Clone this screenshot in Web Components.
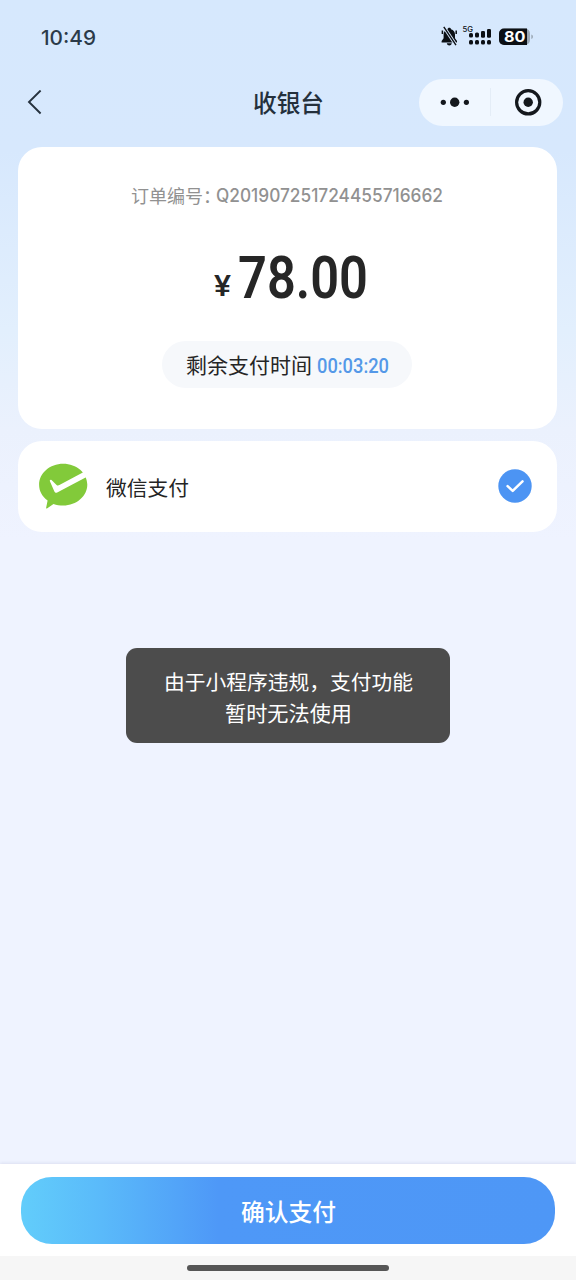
<!DOCTYPE html>
<html lang="zh-CN">
<head>
<meta charset="utf-8">
<title>收银台</title>
<style>
html,body{margin:0;height:100%;overflow:hidden}
body{font-family:Inter,"Noto Sans CJK SC",sans-serif;color:#222}
</style>
</head>
<body>
<checkout-page></checkout-page>
<script>
function define(name, html, setup) {
  customElements.define(name, class extends HTMLElement {
    constructor() {
      super();
      this.attachShadow({ mode: 'open' }).innerHTML = html;
    }
    connectedCallback() { if (setup) setup(this, this.shadowRoot); }
  });
}

/* One line of text fitted to a given width and baseline. */
define('fit-text', `<style>
:host{display:block;flex:none}
svg{display:block;overflow:visible}
text{fill:currentColor}
</style><svg><text></text></svg>`, (el, root) => {
  const w = el.getAttribute('w'), h = el.getAttribute('h');
  const svg = root.querySelector('svg'), t = root.querySelector('text');
  svg.setAttribute('width', w);
  svg.setAttribute('height', h);
  t.setAttribute('y', el.getAttribute('base'));
  t.setAttribute('textLength', w);
  t.setAttribute('lengthAdjust', 'spacingAndGlyphs');
  t.setAttribute('font-size', el.getAttribute('size'));
  t.setAttribute('font-weight', el.getAttribute('weight') || 400);
  t.textContent = el.getAttribute('text');
});

define('status-bar', `<style>
:host{display:flex;justify-content:space-between;height:74px;box-sizing:border-box;padding:26px 43px 0 40.500px;color:#2b3a49}
svg{display:block;margin-top:-1px}
</style>
<fit-text text="10:49" w="55" h="24" base="18.5" size="20.5" weight="500"></fit-text>
<svg width="92" height="24" viewBox="0 0 92 24" fill="#0b0f14">
<path d="M8.300 2.800c1 0 1.600.6 1.700 1.400 2.600.8 4 2.700 4 5.200v3.800l2 2.900v1.500H.6v-1.500l2-2.900V9.400c0-2.500 1.400-4.400 4-5.200.100-.8.700-1.400 1.700-1.400zM5.800 18.300h5c-.3 1.500-1.300 2.200-2.500 2.200s-2.200-.7-2.500-2.200z"/>
<path d="M1.400 5.500v3.500M15.200 5.500v3.500" stroke="#0b0f14" stroke-width="1.500"/>
<path d="M2.800 1.800l12.200 18.400" stroke="#d7e8fd" stroke-width="3.200"/>
<path d="M2.800 1.800l12.200 18.400" stroke="#0b0f14" stroke-width="1.400"/>
<text x="21.500" y="6.800" font-family="Inter" font-size="7.500" font-weight="500" textLength="10.500" lengthAdjust="spacingAndGlyphs">5G</text>
<rect x="28" y="8" width="4" height="4.500" rx="1.600"/><rect x="34" y="7.500" width="4" height="5" rx="1.600"/><rect x="40" y="6" width="4" height="6.700" rx="1.300"/><rect x="46" y="4" width="4" height="8.700" rx="1.200"/>
<rect x="28" y="15" width="4" height="4.500" rx="1.500"/><rect x="34" y="15" width="4" height="4.500" rx="1.500"/><rect x="40" y="15" width="4" height="4.500" rx="1.500"/><rect x="46" y="15" width="4" height="4.500" rx="1.500"/>
<rect x="58" y="3.500" width="31" height="16.500" rx="5" fill="#9ba8b5"/>
<path d="M63 3.500h23v16.500H63a5 5 0 0 1-5-5v-6.500a5 5 0 0 1 5-5z"/>
<path d="M90.300 9.500q1.700.3 1.700 2.300t-1.700 2.300z" fill="#9ba8b5"/>
<text x="63" y="16.900" font-family="Inter" font-size="14.500" font-weight="700" fill="#fff" textLength="21.500" lengthAdjust="spacingAndGlyphs">80</text>
</svg>`);

define('nav-bar', `<style>
:host{display:grid;grid-template-columns:1fr 71px 1fr;height:58px;color:#24303c}
.back{margin:16px 0 0 27px}
fit-text{margin:15.500px 0 0 .500px}
.capsule{justify-self:end;margin:5px 13px 0 0;width:144px;height:47px;border-radius:24px;background:#f0f7ff}
svg{display:block}
</style>
<svg class="back" width="16" height="26" viewBox="0 0 16 26" fill="none" stroke="#26323e" stroke-width="1.900"><path d="M13.600 .500 2 12l11.600 11.500"/></svg>
<fit-text text="收银台" w="71" h="26" base="21.500" size="23.700" weight="500"></fit-text>
<div class="capsule"><svg width="144" height="47" viewBox="0 0 144 47" fill="#14181d">
<circle cx="24.300" cy="23.300" r="2.600"/><circle cx="35.700" cy="23.300" r="4.700"/><circle cx="47.400" cy="23.300" r="2.600"/>
<path d="M71.500 9v28" stroke="#e4edf7" stroke-width="1"/>
<circle cx="109.200" cy="23.300" r="11.600" fill="none" stroke="#14181d" stroke-width="3.200"/><circle cx="109.200" cy="23.300" r="4.700"/></svg></div>`);

define('surface-card', `<style>
:host{display:block;background:#fff;border-radius:24px;box-sizing:border-box}
</style><slot></slot>`);

define('order-summary', `<style>
:host{display:flex;flex-direction:column;align-items:center;height:282px;box-sizing:border-box;padding:37px 1px 0 0}
div{display:flex}
.order{color:#919191;width:312px}
.order fit-text + fit-text{margin-left:-5px}
.amount{margin-top:43px;width:153px;padding-left:6px;gap:7px;color:#262626;font-family:Roboto,"Noto Sans CJK SC",sans-serif}
.timer{box-sizing:border-box;width:250px;height:47px;margin-top:39px;border-radius:24px;background:#f6f8fb;padding:11px 24px;gap:5px;color:#262626}
.clock{color:#5498e8;font-family:Roboto,sans-serif}
</style>
<div class="order"><fit-text text="订单编号：" w="90" h="24" base="18.500" size="18"></fit-text><fit-text text="Q201907251724455716662" w="227" h="24" base="18" size="18.300" weight="450"></fit-text></div>
<div class="amount"><fit-text text="¥" w="17" h="51" base="45" size="29" weight="500"></fit-text><fit-text text="78.00" w="130" h="51" base="47" size="60" weight="650"></fit-text></div>
<div class="timer"><fit-text text="剩余支付时间" w="126" h="24" base="21" size="21"></fit-text><fit-text class="clock" text="00:03:20" w="72" h="24" base="20.500" size="21" weight="500"></fit-text></div>`);

define('payment-method', `<style>
:host{display:flex;align-items:center;height:91px;padding:0 25.500px 0 20px;color:#242424}
svg{display:block;flex:none;margin-bottom:1px}
fit-text{margin:0 auto 0 17.500px}
</style>
<svg width="50" height="48" viewBox="0 0 50 48"><path d="M25.200 1.700C38.600 1.700 49.300 11 49.300 22.600S38.600 43.600 25.200 43.600c-3.300 0-6.800-.600-9.700-1.700L9.300 46.300c-.800.500-1.400.200-1.100-.900l1.400-6.900C4.200 34.800 1.100 29.200 1.100 22.800 1.100 11.100 11.800 1.700 25.200 1.700z" fill="#82ca3a"/><path d="M12 19.500c-.600-1.200.3-2.200 1.500-1.500l4.800 4.700c1 1 1.900 1.100 3.100.4L45.300 10.300 49 14.800 19.200 30.400c-1.300.7-2.200.4-2.800-.8z" fill="#fff"/></svg>
<fit-text text="微信支付" w="83" h="26" base="22" size="20.800"></fit-text>
<svg width="34" height="34" viewBox="0 0 34 34"><circle cx="17" cy="17" r="16.700" fill="#4c94f3"/><path d="M9.600 17.200l5.100 4.700 9.800-9.500" fill="none" stroke="#fff" stroke-width="2.500" stroke-linecap="round" stroke-linejoin="round"/></svg>`);

define('toast-message', `<style>
:host{display:flex;flex-direction:column;align-items:center;box-sizing:border-box;height:95px;padding-top:18px;border-radius:11px;background:#4c4c4c;color:#fff}
</style>
<fit-text text="由于小程序违规，支付功能" w="249" h="31" base="23.500" size="20.800"></fit-text>
<fit-text text="暂时无法使用" w="127" h="31" base="23.500" size="21"></fit-text>`);

define('pay-footer', `<style>
:host{display:block;background:#fff;box-shadow:0 -1px 3px rgba(80,90,130,.12)}
.wrap{height:92px;box-sizing:border-box;padding:12.500px 21px 0}
button{all:unset;box-sizing:border-box;display:flex;justify-content:center;width:100%;height:67.500px;padding-top:21px;border-radius:31px;background:linear-gradient(90deg,#62cdfb 0,#5abafa 15%,#4e98f7 37%,#4e97f6 100%);color:#fff}
.home{height:24px;background:#f6f6f6;display:flex;justify-content:center;align-items:center}
.home i{width:202px;height:6px;border-radius:3px;background:#565656}
</style>
<div class="wrap"><button><fit-text text="确认支付" w="95" h="26" base="22.500" size="23.700" weight="500"></fit-text></button></div>
<div class="home"><i></i></div>`);

define('checkout-page', `<style>
:host{position:relative;display:flex;flex-direction:column;width:576px;height:1280px;overflow:hidden;background:linear-gradient(180deg,#d6e8fd 0,#d7e8fd 150px,#e2effd 330px,#ebf1fd 430px,#eff3ff 540px,#eff3ff 100%)}
main{flex:1;display:flex;flex-direction:column;gap:12px;padding:15px 19px 0 18px}
toast-message{position:absolute;left:126px;top:648px;width:324px}
</style>
<status-bar></status-bar><nav-bar></nav-bar>
<main><surface-card><order-summary></order-summary></surface-card><surface-card><payment-method></payment-method></surface-card></main>
<pay-footer></pay-footer>
<toast-message></toast-message>`);
</script>
</body>
</html>
